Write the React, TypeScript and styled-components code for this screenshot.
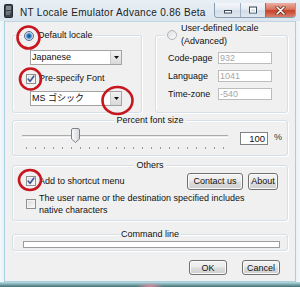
import React from 'react';
import styled, { createGlobalStyle } from 'styled-components';

const Global = createGlobalStyle`
  html, body { margin: 0; padding: 0; background: #ffffff; }
  body {
    font-family: "Liberation Sans", Arial, "Noto Sans CJK JP", sans-serif;
    font-size: 9px;
    color: #111;
  }
  * { box-sizing: border-box; }
`;

const Window = styled.div`
  position: relative;
  width: 300px;
  height: 287px;
  display: flex;
  flex-direction: column;
  background: linear-gradient(to right, #f3f8fb 0px, #e4edf4 6px, #dfe8f0 50%, #e4edf4 294px, #f3f8fb 300px);
  overflow: hidden;
`;

const TitleBar = styled.div`
  height: 21px;
  flex: none;
  display: flex;
  align-items: flex-start;
  padding: 0 4px 0 4px;
  background: linear-gradient(#e8eff5, #dbe5ee);
`;

const AppIcon = styled.svg`
  margin-top: 4px;
  flex: none;
`;

const Title = styled.div`
  margin-left: 7px;
  margin-top: 7px;
  font-size: 10px;
  letter-spacing: 0.3px;
  line-height: 12px;
  color: #1b1b1b;
  white-space: nowrap;
`;

const CaptionButtons = styled.div`
  margin-left: auto;
  margin-top: 3px;
  height: 15px;
  display: flex;
  border: 1px solid #8a9cb0;
  border-top: none;
  border-radius: 0 0 4px 4px;
  overflow: hidden;
`;

const CapBtn = styled.div<{ $w: number; $close?: boolean }>`
  width: ${(p) => p.$w}px;
  height: 100%;
  display: flex;
  align-items: center;
  justify-content: center;
  border-left: ${(p) => (p.$close ? '1px solid #8a6a6a' : '1px solid #9fb0c2')};
  background: ${(p) =>
    p.$close
      ? 'linear-gradient(#eab0a2 0%, #d9745d 45%, #c7412a 55%, #d9806a 100%)'
      : 'linear-gradient(#f4f7fa 0%, #e4ebf2 45%, #d3dde8 55%, #dfe7f0 100%)'};
  &:first-child { border-left: none; }
`;

const Client = styled.div`
  flex: 1;
  margin: 0 4px;
  background: #f0f0f0;
  border: 1px solid #a9cfdf;
  border-top-color: #c3d5e2;
  padding: 0 7px;
  display: flex;
  flex-direction: column;
`;

const BottomFrame = styled.div`
  height: 5px;
  flex: none;
  background:
    radial-gradient(ellipse 14px 5px at 50% 100%, rgba(255, 140, 170, 0.8), rgba(255, 140, 170, 0) 100%),
    linear-gradient(#b9dfe6, #3f6f74);
`;

const TopRow = styled.div`
  margin-top: 13px;
  height: 78px;
  display: flex;
  gap: 13px;
`;

const Group = styled.div<{ $w?: number; $h?: number; $mt?: number }>`
  ${(p) => (p.$w ? `width: ${p.$w}px;` : '')}
  ${(p) => (p.$h ? `height: ${p.$h}px; flex: none;` : '')}
  ${(p) => (p.$mt ? `margin-top: ${p.$mt}px;` : '')}
  border: 1px solid #d5dfe5;
  border-radius: 3px;
  box-shadow: inset 1px 1px 0 #ffffff, 1px 1px 0 #ffffff;
  display: flex;
  flex-direction: column;
`;

const Caption = styled.div<{ $center?: boolean; $lines?: number }>`
  align-self: ${(p) => (p.$center ? 'center' : 'flex-start')};
  margin-top: ${(p) => ((p.$lines ?? 1) === 2 ? -14 : -7)}px;
  margin-left: ${(p) => (p.$center ? 0 : 9)}px;
  padding: 0 2px;
  background: #f0f0f0;
  line-height: 13px;
  display: flex;
  align-items: center;
  gap: 4px;
  white-space: nowrap;
`;

const Radio = styled.span<{ $on?: boolean }>`
  width: 10px;
  height: 10px;
  flex: none;
  border-radius: 50%;
  border: 1px solid ${(p) => (p.$on ? '#5c6b7c' : '#b0b4b8')};
  background: ${(p) =>
    p.$on
      ? 'radial-gradient(circle at 50% 50%, #143f6b 0px, #2f77bb 1.6px, #69aee6 2.8px, #c4d9ea 3.4px, #eef2f5 4.5px, #dfe3e7 100%)'
      : 'linear-gradient(135deg, #dcdfe2, #fbfbfb)'};
`;

const CheckBox = styled.span<{ $on?: boolean }>`
  width: 10px;
  height: 10px;
  flex: none;
  border: 1px solid #8e8f8f;
  background: linear-gradient(135deg, #d6d8db, #fbfbfb);
  box-shadow: inset 0 0 0 1px #f4f4f4;
  display: flex;
  align-items: center;
  justify-content: center;
`;

const Body = styled.div<{ $pl?: number; $pt?: number }>`
  display: flex;
  flex-direction: column;
  padding-left: ${(p) => p.$pl ?? 0}px;
  padding-top: ${(p) => p.$pt ?? 0}px;
`;

const Combo = styled.div<{ $mt?: number }>`
  width: 92px;
  height: 15px;
  margin-left: 4px;
  margin-top: ${(p) => p.$mt ?? 0}px;
  border: 1px solid #a3a3a3;
  background: #ffffff;
  display: flex;
  align-items: center;
`;

const ComboText = styled.span`
  flex: 1;
  padding-left: 1px;
  line-height: 13px;
  white-space: nowrap;
  font-family: "Liberation Sans", Arial, "Noto Sans CJK JP", sans-serif;
`;

const DropBtn = styled.span`
  width: 11px;
  height: 13px;
  flex: none;
  border-left: 1px solid #c9c9c9;
  background: linear-gradient(#f2f2f2, #d9d9d9);
  display: flex;
  align-items: center;
  justify-content: center;
`;

const CheckRow = styled.div<{ $mt?: number }>`
  margin-top: ${(p) => p.$mt ?? 0}px;
  height: 13px;
  display: flex;
  align-items: center;
  gap: 3px;
  line-height: 13px;
  white-space: nowrap;
`;

const FieldRow = styled.div<{ $mt?: number }>`
  margin-top: ${(p) => p.$mt ?? 0}px;
  height: 12px;
  display: flex;
  align-items: center;
`;

const FieldLabel = styled.span`
  width: 50px;
  line-height: 12px;
`;

const Field = styled.div`
  width: 54px;
  height: 12px;
  border: 1px solid #bcbcbc;
  background: #ffffff;
  color: #a6a6a6;
  padding-left: 1px;
  line-height: 10px;
`;

const SliderRow = styled.div`
  display: flex;
  align-items: flex-start;
`;

const Slider = styled.div`
  margin-left: 9px;
  width: 206px;
  display: flex;
  flex-direction: column;
`;

const TrackArea = styled.div`
  position: relative;
  height: 16px;
  margin-top: 1px;
`;

const Track = styled.div`
  position: absolute;
  left: 0;
  right: 0;
  top: 7px;
  height: 3px;
  background: #e6e8e9;
  border-top: 1px solid #a9abad;
  border-bottom: 1px solid #ffffff;
`;

const Thumb = styled.svg`
  position: absolute;
  top: 0;
  margin-left: -4.5px;
`;

const Ticks = styled.div`
  margin: 3px 4px 0 4px;
  height: 3px;
  display: flex;
  justify-content: space-between;
`;

const Tick = styled.span`
  width: 1px;
  height: 2px;
  background: #9a9a9a;
`;

const PercentBox = styled.div`
  margin-left: 12px;
  margin-top: 5px;
  width: 28px;
  height: 13px;
  border: 1px solid #7f8287;
  background: #ffffff;
  text-align: right;
  padding-right: 2px;
  line-height: 11px;
  font-size: 9.5px;
`;

const PercentSign = styled.span`
  margin-left: 6px;
  margin-top: 4px;
  line-height: 13px;
  color: #333;
`;

const OthersRow = styled.div`
  height: 18px;
  display: flex;
  align-items: center;
  padding-left: 13px;
  padding-right: 9px;
  gap: 3px;
  white-space: nowrap;
`;

const ButtonGroup = styled.div`
  margin-left: auto;
  display: flex;
  gap: 5px;
`;

const Button = styled.div<{ $w: number; $h?: number }>`
  width: ${(p) => p.$w}px;
  height: ${(p) => p.$h ?? 17}px;
  border: 1px solid #707070;
  border-radius: 3px;
  background: linear-gradient(#f3f3f3 0%, #ebebeb 48%, #dddddd 52%, #cfcfcf 100%);
  box-shadow: inset 0 0 0 1px #fbfbfb;
  display: flex;
  align-items: center;
  justify-content: center;
  color: #111;
  white-space: nowrap;
`;

const WrapRow = styled.div`
  margin-top: 2px;
  padding-left: 13px;
  display: flex;
  align-items: center;
  gap: 3px;
`;

const WrapText = styled.span`
  width: 212px;
  line-height: 12px;
`;

const CmdInput = styled.div`
  margin-left: 10px;
  width: 257px;
  height: 7px;
  border: 1px solid #9c9c9c;
  background: #ffffff;
`;

const DialogButtons = styled.div`
  margin-top: 9px;
  display: flex;
  justify-content: flex-end;
  gap: 15px;
  padding-right: 8px;
`;

const Marks = styled.svg`
  position: absolute;
  left: 0;
  top: 0;
  pointer-events: none;
`;

const Check = () => (
  <svg width="8" height="8" viewBox="0 0 8 8">
    <path d="M1.2 4.2 L3.1 6.3 L6.8 1.2" fill="none" stroke="#3f5690" strokeWidth="1.6" strokeLinejoin="round" strokeLinecap="round" />
  </svg>
);

const Arrow = () => (
  <svg width="5" height="3" viewBox="0 0 5 3">
    <path d="M0 0 H5 L2.5 3 Z" fill="#111" />
  </svg>
);

const SLIDER = { min: 50, max: 250, value: 100, ticks: 23, width: 206, inset: 4 };

export default function App() {
  const ratio = (SLIDER.value - SLIDER.min) / (SLIDER.max - SLIDER.min);
  const thumbX = SLIDER.inset + ratio * (SLIDER.width - SLIDER.inset * 2);
  return (
    <>
      <Global />
      <Window>
        <TitleBar>
          <AppIcon width="9" height="14" viewBox="0 0 9 14">
            <rect x="0.5" y="0.5" width="8" height="13" rx="1" fill="#3c434b" stroke="#23282e" />
            <rect x="2" y="2" width="5" height="4" fill="#7e8a96" />
            <path d="M2 8 H7 M2 10 H6" stroke="#9aa5b0" strokeWidth="1" />
          </AppIcon>
          <Title>NT Locale Emulator Advance 0.86 Beta</Title>
          <CaptionButtons>
            <CapBtn $w={25}>
              <svg width="10" height="8" viewBox="0 0 10 8">
                <rect x="1.5" y="4.5" width="7" height="2.5" fill="#fff" stroke="#3b4a5c" strokeWidth="1" />
              </svg>
            </CapBtn>
            <CapBtn $w={25}>
              <svg width="10" height="8" viewBox="0 0 10 8">
                <rect x="1.5" y="1" width="7" height="6" fill="none" stroke="#3b4a5c" strokeWidth="1" />
                <rect x="2.5" y="2.5" width="5" height="3.5" fill="none" stroke="#fff" strokeWidth="1" />
              </svg>
            </CapBtn>
            <CapBtn $w={30} $close>
              <svg width="11" height="9" viewBox="0 0 11 9">
                <path d="M2 1 L9 8 M9 1 L2 8" stroke="#5a2418" strokeWidth="3" strokeLinecap="round" />
                <path d="M2 1 L9 8 M9 1 L2 8" stroke="#ffffff" strokeWidth="1.6" strokeLinecap="round" />
              </svg>
            </CapBtn>
          </CaptionButtons>
        </TitleBar>

        <Client>
          <TopRow>
            <Group $w={130}>
              <Caption>
                <Radio $on />
                <span>Default locale</span>
              </Caption>
              <Body $pl={13} $pt={8}>
                <Combo>
                  <ComboText>Japanese</ComboText>
                  <DropBtn><Arrow /></DropBtn>
                </Combo>
                <CheckRow $mt={7}>
                  <CheckBox $on><Check /></CheckBox>
                  <span>Pre-specify Font</span>
                </CheckRow>
                <Combo $mt={6}>
                  <ComboText>MS ゴシック</ComboText>
                  <DropBtn><Arrow /></DropBtn>
                </Combo>
              </Body>
            </Group>
            <Group $w={133}>
              <Caption $lines={2}>
                <Radio />
                <span>User-defined locale<br />(Advanced)</span>
              </Caption>
              <Body $pl={12} $pt={4}>
                <FieldRow>
                  <FieldLabel>Code-page</FieldLabel>
                  <Field>932</Field>
                </FieldRow>
                <FieldRow $mt={6}>
                  <FieldLabel>Language</FieldLabel>
                  <Field>1041</Field>
                </FieldRow>
                <FieldRow $mt={6}>
                  <FieldLabel>Time-zone</FieldLabel>
                  <Field>-540</Field>
                </FieldRow>
              </Body>
            </Group>
          </TopRow>

          <Group $h={36} $mt={7}>
            <Caption $center>Percent font size</Caption>
            <SliderRow>
              <Slider>
                <TrackArea>
                  <Track />
                  <Thumb width="9" height="15" viewBox="0 0 9 15" style={{ left: thumbX }}>
                    <defs>
                      <linearGradient id="thumbg" x1="0" y1="0" x2="1" y2="0">
                        <stop offset="0" stopColor="#fbfbfb" />
                        <stop offset="1" stopColor="#d3d5d8" />
                      </linearGradient>
                    </defs>
                    <path d="M0.5 2 Q0.5 0.5 2 0.5 H7 Q8.5 0.5 8.5 2 V11 L4.5 14.5 L0.5 11 Z" fill="url(#thumbg)" stroke="#7d8288" />
                  </Thumb>
                </TrackArea>
                <Ticks>
                  {Array.from({ length: SLIDER.ticks }).map((_, i) => (
                    <Tick key={i} />
                  ))}
                </Ticks>
              </Slider>
              <PercentBox>100</PercentBox>
              <PercentSign>%</PercentSign>
            </SliderRow>
          </Group>

          <Group $h={56} $mt={9}>
            <Caption $center>Others</Caption>
            <OthersRow>
              <CheckBox $on><Check /></CheckBox>
              <span>Add to shortcut menu</span>
              <ButtonGroup>
                <Button $w={56}>Contact us</Button>
                <Button $w={30}>About</Button>
              </ButtonGroup>
            </OthersRow>
            <WrapRow>
              <CheckBox />
              <WrapText>The user name or the destination specified includes native characters</WrapText>
            </WrapRow>
          </Group>

          <Group $h={17} $mt={13}>
            <Caption $center>Command line</Caption>
            <CmdInput />
          </Group>

          <DialogButtons>
            <Button $w={38} $h={15}>OK</Button>
            <Button $w={38} $h={15}>Cancel</Button>
          </DialogButtons>
        </Client>
        <BottomFrame />

        <Marks width="300" height="287" viewBox="0 0 300 287">
          <g fill="none" stroke="#c8161f" strokeWidth="2.6">
            <ellipse cx="28.5" cy="37.5" rx="11" ry="11" />
            <ellipse cx="30.5" cy="79" rx="10.5" ry="10.5" />
            <ellipse cx="117.5" cy="100.5" rx="15" ry="13.5" />
            <ellipse cx="30" cy="180" rx="11" ry="10" />
          </g>
        </Marks>
      </Window>
    </>
  );
}
